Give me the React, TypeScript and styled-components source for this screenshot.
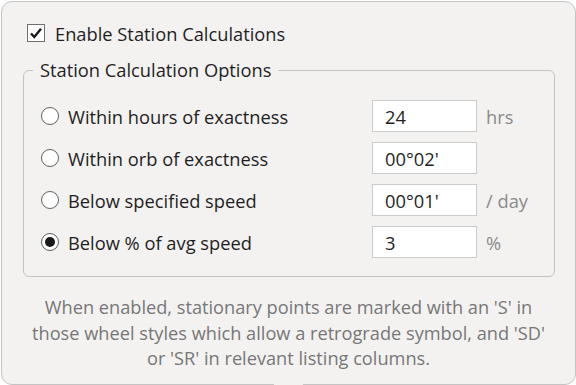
import React, { useState } from "react"
import styled, { createGlobalStyle } from "styled-components"

const Global = createGlobalStyle`
  html, body {
    margin: 0;
    padding: 0;
    background: #ffffff;
  }
  body {
    font-family: "Open Sans", "Noto Sans", sans-serif;
  }
`

const Panel = styled.div`
  position: relative;
  box-sizing: border-box;
  width: 575px;
  height: 384px;
  margin: 1px 0 0 1px;
  border: 1px solid #c4c4c4;
  border-radius: 11px;
  background: #f3f2f1;
  padding: 20px 21px 0 21px;
  color: #1f1f1f;

  &::after {
    content: "";
    position: absolute;
    left: 272px;
    bottom: -1px;
    width: 29px;
    height: 2px;
    background: #f3f2f1;
  }
`

const CheckRow = styled.label`
  display: flex;
  align-items: center;
  gap: 10px;
  padding-left: 4px;
  font-size: 18.3px;
  height: 22px;
`

const CheckBox = styled.span`
  box-sizing: border-box;
  width: 18px;
  height: 18px;
  border: 1px solid #6f6f6f;
  background: #ffffff;
  display: flex;
  align-items: center;
  justify-content: center;
`

const Group = styled.fieldset`
  box-sizing: border-box;
  margin: 16px 0 0 0;
  width: 532px;
  height: 217px;
  border: 1px solid #c4c4c4;
  border-radius: 6px;
  padding: 20px 0 0 17px;
`

const Legend = styled.legend`
  font-size: 18.3px;
  padding: 0 7px;
  margin-left: -8px;
  line-height: 20px;
`

const Rows = styled.div`
  display: flex;
  flex-direction: column;
  gap: 10px;
`

const Row = styled.div`
  display: flex;
  align-items: center;
  height: 32px;
`

const RadioLabel = styled.label`
  display: flex;
  align-items: center;
  gap: 9px;
  width: 331px;
  font-size: 18.3px;
`

const Radio = styled.span<{ $on: boolean }>`
  box-sizing: border-box;
  width: 18px;
  height: 18px;
  border-radius: 50%;
  border: 1px solid #5f5f5f;
  background: #ffffff;
  display: flex;
  align-items: center;
  justify-content: center;

  &::after {
    content: "";
    display: ${(p) => (p.$on ? "block" : "none")};
    width: 10px;
    height: 10px;
    border-radius: 50%;
    background: #1a1a1a;
  }
`

const Field = styled.input`
  box-sizing: border-box;
  width: 105px;
  height: 32px;
  border: 1px solid #cbcbcb;
  background: #ffffff;
  padding: 0 12px;
  font-family: inherit;
  font-size: 18.3px;
  color: #1f1f1f;
  outline: none;
`

const Unit = styled.span`
  margin-left: 9px;
  font-size: 18.3px;
  color: #8a8a8a;
`

const Note = styled.p`
  margin: 18px 0 0 0;
  text-align: center;
  font-size: 18.2px;
  line-height: 25.5px;
  color: #777777;
`

const options = [
  { label: "Within hours of exactness", value: "24", unit: "hrs" },
  { label: "Within orb of exactness", value: "00°02'", unit: "" },
  { label: "Below specified speed", value: "00°01'", unit: "/ day" },
  { label: "Below % of avg speed", value: "3", unit: "%" },
]

const App: React.FC = () => {
  const [selected, setSelected] = useState(3)
  return (
    <>
      <Global />
      <Panel>
        <CheckRow>
          <CheckBox>
            <svg width="14" height="14" viewBox="0 0 14 14">
              <path d="M2 7.5 L5.3 11 L12 2.8" fill="none" stroke="#1a1a1a" strokeWidth="2.4" />
            </svg>
          </CheckBox>
          Enable Station Calculations
        </CheckRow>
        <Group>
          <Legend>Station Calculation Options</Legend>
          <Rows>
            {options.map((o, i) => (
              <Row key={o.label}>
                <RadioLabel onClick={() => setSelected(i)}>
                  <Radio $on={selected === i} />
                  {o.label}
                </RadioLabel>
                <Field defaultValue={o.value} />
                <Unit>{o.unit}</Unit>
              </Row>
            ))}
          </Rows>
        </Group>
        <Note>
          When enabled, stationary points are marked with an 'S' in
          <br />
          those wheel styles which allow a retrograde symbol, and 'SD'
          <br />
          or 'SR' in relevant listing columns.
        </Note>
      </Panel>
    </>
  )
}

export default App
